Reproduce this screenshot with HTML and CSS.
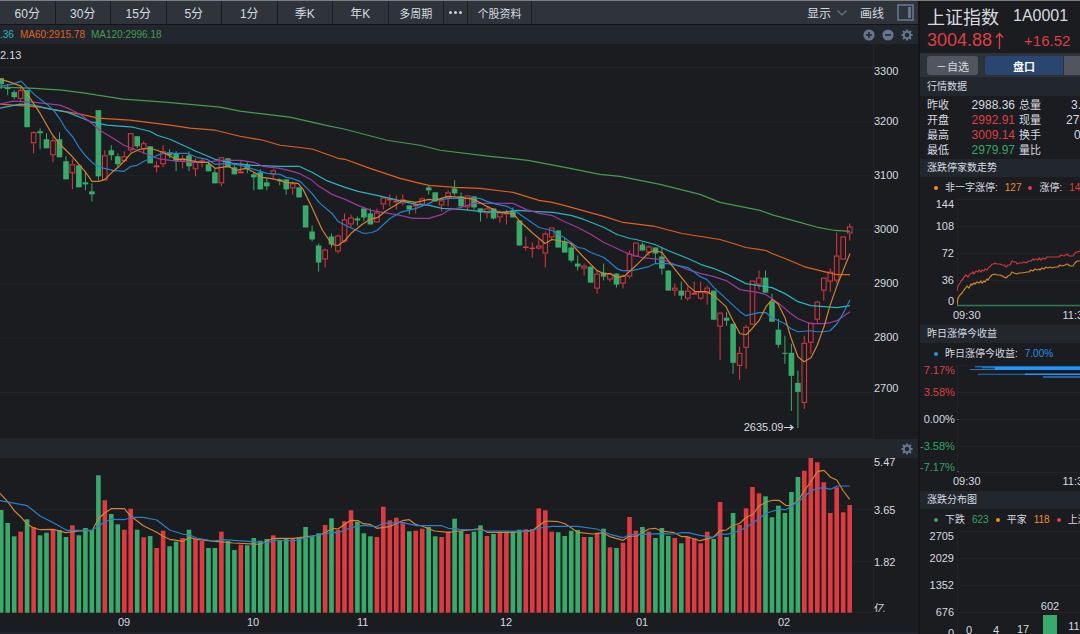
FILE: index.html
```html
<!DOCTYPE html>
<html lang="zh-CN">
<head>
<meta charset="utf-8">
<title>上证指数 1A0001</title>
<link rel="stylesheet" href="styles.css">
</head>
<body>
<svg class="defs" aria-hidden="true">
  <symbol id="gear" viewBox="0 0 12 12">
    <g stroke="currentColor" stroke-width="2.2"><path d="M6 .4v11.2M.4 6h11.2M2 2l8 8M10 2l-8 8"/></g>
    <circle cx="6" cy="6" r="4.1" fill="currentColor"/><circle cx="6" cy="6" r="2.2" fill="#22272e"/>
  </symbol>
</svg>
<div class="app">
  <main class="board">
    <nav class="toolbar">
      <div class="periods">
        <button>60分</button><button>30分</button><button>15分</button><button>5分</button><button>1分</button><button>季K</button><button>年K</button><button class="small">多周期</button>
      </div>
      <button class="more" aria-label="更多"><i></i><i></i><i></i></button>
      <button class="info small">个股资料</button>
      <div class="tools">
        <button>显示<svg width="10" height="6" viewBox="0 0 10 6"><path d="M.5 .5L5 5L9.500 .5" fill="none" stroke="#66758f" stroke-width="1.2"/></svg></button>
        <button>画线</button>
        <button aria-label="侧栏"><svg width="17" height="17" viewBox="0 0 17 17"><rect x="1" y="1" width="15" height="15" fill="none" stroke="#66758f" stroke-width="1.6"/><rect x="11" y="3" width="3" height="11" fill="#66758f"/></svg></button>
      </div>
    </nav>
    <div class="strip">
      <span class="cyan">.36</span><span class="rust">MA60:2915.78</span><span class="leaf">MA120:2996.18</span>
      <div class="icons">
        <button aria-label="放大"><svg width="12" height="12" viewBox="0 0 12 12"><circle cx="6" cy="6" r="5.6" fill="currentColor"/><path d="M6 3v6M3 6h6" stroke="#22272e" stroke-width="1.6"/></svg></button>
        <button aria-label="缩小"><svg width="12" height="12" viewBox="0 0 12 12"><circle cx="6" cy="6" r="5.6" fill="currentColor"/><path d="M3 6h6" stroke="#22272e" stroke-width="1.6"/></svg></button>
        <button aria-label="设置"><svg width="12" height="12"><use href="#gear"/></svg></button>
      </div>
    </div>
    <section class="pane price">
      <div class="plot">
        <svg id="price" viewBox="0 44 873 394" preserveAspectRatio="none"></svg>
        <span class="peak">2.13</span>
        <span class="low">2635.09<svg width="10" height="7" viewBox="0 0 10 7"><path d="M0 3.500H8M6 1L9 3.500L6 6" fill="none" stroke="currentColor" stroke-width="1.2"/></svg></span>
      </div>
      <div class="axis"><span>3300</span><span>3200</span><span>3100</span><span>3000</span><span>2900</span><span>2800</span><span>2700</span></div>
    </section>
    <div class="strip vol"><div class="icons"><button aria-label="成交量设置"><svg width="12" height="12"><use href="#gear"/></svg></button></div></div>
    <section class="pane volume">
      <div class="plot"><svg id="volume" viewBox="0 458 873 155" preserveAspectRatio="none"></svg></div>
      <div class="axis"><span>5.47</span><span>3.65</span><span>1.82</span><span>亿</span></div>
    </section>
    <div class="months"><span></span><span>09</span><span>10</span><span>11</span><span>12</span><span>01</span><span>02</span></div>
    <div class="foot"></div>
  </main>

  <aside class="quote">
    <header>
      <h1>上证指数 <span>1A0001</span></h1>
      <p class="last"><b>3004.88</b><svg width="9" height="17" viewBox="0 0 9 17"><path d="M4.500 17V1.500M1 5.500L4.500 1.500L8 5.500" fill="none" stroke="currentColor" stroke-width="1.3"/></svg><span>+16.52</span></p>
    </header>
    <div class="switch"><button class="fav">－自选</button><button class="tab on">盘口</button><button class="tab" aria-label="更多"></button></div>
    <h2 class="first">行情数据</h2>
    <table>
      <tr><th>昨收</th><td>2988.36</td><th>总量</th><td class="cut">3.</td></tr>
      <tr><th>开盘</th><td class="red">2992.91</td><th>现量</th><td class="cut wide">27.</td></tr>
      <tr><th>最高</th><td class="red">3009.14</td><th>换手</th><td class="cut zero">0</td></tr>
      <tr><th>最低</th><td class="green">2979.97</td><th>量比</th><td></td></tr>
    </table>
    <section class="mini">
      <h2>涨跌停家数走势</h2>
      <div class="legend"><i class="amber"></i><span>非一字涨停:</span><em class="amber">127</em><i class="red"></i><span>涨停:</span><em class="red">14</em></div>
      <div class="graph"><div class="scale"><span>144</span><span>108</span><span>72</span><span>36</span><span>0</span></div><svg id="limit" width="123" height="115" viewBox="0 0 123 115"></svg></div>
      <div class="hours"><span>09:30</span><span>11:30</span></div>
    </section>
    <section class="mini">
      <h2>昨日涨停今收益</h2>
      <div class="legend"><i class="blue"></i><span>昨日涨停今收益:</span><em class="blue">7.00%</em></div>
      <div class="graph"><div class="scale"><span class="red">7.17%</span><span class="red">3.58%</span><span>0.00%</span><span class="green">-3.58%</span><span class="green">-7.17%</span></div><svg id="gain" width="123" height="115" viewBox="0 0 123 115"></svg></div>
      <div class="hours"><span>09:30</span><span>11:30</span></div>
    </section>
    <section class="mini">
      <h2>涨跌分布图</h2>
      <div class="legend"><i class="green"></i><span>下跌</span><em class="green">623</em><i class="amber"></i><span>平家</span><em class="amber">118</em><i class="red"></i><span>上涨</span></div>
      <div class="graph"><div class="scale"><span>2705</span><span>2029</span><span>1352</span><span>676</span><span>0</span></div><svg id="spread" width="123" height="115" viewBox="0 0 123 115"></svg></div>
    </section>
  </aside>
</div>
<script src="chart.js"></script>
</body>
</html>
```
FILE: styles.css
```css
* { box-sizing: border-box; }
body {
  margin: 0;
  height: 100vh;
  overflow: hidden;
  background: #1b1c1f;
  color: #d6dae0;
  font-family: "Liberation Sans", "Noto Sans CJK SC", sans-serif;
  font-size: 11px;
}
button {
  margin: 0;
  padding: 0;
  border: 0;
  background: none;
  color: inherit;
  font: inherit;
  white-space: nowrap;
}
h1, h2, p { margin: 0; font-weight: normal; }
svg { display: block; }
em { font-style: normal; }
.defs { position: absolute; width: 0; height: 0; }
.app {
  display: grid;
  grid-template-columns: 1fr 162px;
  min-height: 100vh;
  border-top: 1px solid #7b7d7e;
}
.board { min-width: 0; }

.toolbar {
  display: flex;
  height: 24px;
  background: #2f343b;
  border-bottom: 1px solid #131417;
  font-size: 12px;
}
.periods {
  display: grid;
  grid-template-columns: repeat(8, 1fr);
  width: 444px;
}
.periods button, .more, .info { border-right: 1px solid #1a1c20; }
.toolbar .small { font-size: 11px; }
.more {
  display: flex;
  align-items: center;
  justify-content: center;
  gap: 2px;
  width: 24px;
}
.more i { width: 3px; height: 3px; border-radius: 50%; background: #ced2d8; }
.info { width: 64px; }
.tools {
  display: flex;
  align-items: center;
  gap: 13px;
  margin-left: auto;
  padding-right: 4px;
}
.tools button { display: flex; align-items: center; gap: 6px; }

.strip {
  display: flex;
  align-items: center;
  gap: 6px;
  height: 19px;
  background: #22272e;
  font-size: 10px;
}
.icons {
  display: flex;
  gap: 7px;
  margin-left: auto;
  padding-right: 5px;
  color: #66758f;
}
.pane { display: grid; grid-template-columns: 1fr 45px; }
.plot { position: relative; min-width: 0; }
.plot > svg { width: 100%; height: 100%; }
.price { height: 395px; }
.volume { height: 155px; }
.peak { position: absolute; left: 0; top: 5px; }
.low {
  position: absolute;
  right: 9%;
  top: 377px;
  display: flex;
  align-items: center;
  gap: 1px;
}
.axis {
  display: grid;
  border-left: 1px solid #222428;
  line-height: 12px;
  align-items: center;
}
.price .axis { grid-template-rows: 50px repeat(5, 54px) 48px; align-content: start; }
.price .axis span:first-child { padding-top: 4px; }
.volume .axis { grid-template-rows: 8px 88px 16px 42px; }
.volume .axis span:last-child { align-self: end; height: 9px; overflow: hidden; }
.months {
  display: grid;
  grid-template-columns: 118fr 129fr 110fr 143fr 136fr 142fr 95fr;
  margin-right: 45px;
  line-height: 19px;
}
.foot { height: 3px; background: #20232b; }

.quote {
  min-width: 0;
  overflow: hidden;
  border-left: 2px solid #141518;
}
.quote header { height: 52px; padding: 3px 0 0 7px; white-space: nowrap; }
h1 { display: flex; align-items: center; gap: 14px; height: 24px; font-size: 18px; }
h1 span { font-size: 16px; }
.last { display: flex; align-items: center; height: 24px; color: #dc3f46; }
.last b { font-size: 18px; font-weight: normal; }
.last svg { margin-left: 3px; }
.last span { margin-left: 20px; font-size: 15px; }
.switch {
  display: flex;
  height: 24px;
  padding: 3px 0 2px 7px;
  background: #2d3138;
}
.fav { flex: none; width: 51px; margin-right: 7px; border-radius: 3px; background: #50555f; }
.tab { width: 79px; flex: none; background: #50555f; }
.tab.on {
  border-right: 1px solid #2d3138;
  border-radius: 3px 0 0 3px;
  background: #28466f;
  color: #fff;
  font-weight: bold;
}
h2 {
  height: 18px;
  padding-left: 7px;
  background: #22272e;
  font-size: 10px;
  line-height: 18px;
}
h2.first { height: 19px; line-height: 19px; }
table {
  width: 100%;
  margin: 2px 0 1px;
  border-collapse: collapse;
  table-layout: fixed;
}
tr { height: 15px; }
th, td { padding: 0; line-height: 15px; font-weight: normal; white-space: nowrap; }
th { width: 29px; padding-left: 7px; text-align: left; }
th:nth-child(3) { padding-left: 4px; width: 44px; }
td { font-size: 12px; text-align: right; }
td:nth-child(2) { width: 66px; }
td.cut { text-align: left; padding-left: 12px; }
td.wide { padding-left: 7px; }
td.zero { padding-left: 15px; }

.legend {
  display: flex;
  align-items: center;
  gap: 7px;
  height: 18px;
  padding: 4px 0 0 14px;
  font-size: 10px;
  line-height: 14px;
  white-space: nowrap;
}
.legend i { flex: none; width: 4px; height: 4px; border-radius: 50%; background: currentColor; }
.graph { display: flex; height: 115px; }
.scale {
  display: grid;
  grid-template-rows: 18px 26px 28px 26px 16px;
  align-items: center;
  justify-items: end;
  width: 37px;
  padding-right: 3px;
  line-height: 12px;
}
.graph svg { flex: none; font-size: 11px; }
.hours {
  display: flex;
  gap: 82px;
  height: 15px;
  padding-left: 33px;
  line-height: 10px;
}
.cyan { color: #2bb3c3; }
.rust { color: #e0601f; }
.leaf { color: #479a50; }
.red { color: #dc3f46; }
.green { color: #35a466; }
.amber { color: #ee8d30; }
.blue { color: #2492ee; }
```
FILE: chart.js
```js
const STEP = 6.477, FIRST = 1.2;
const RED = "#dc3b42", GREEN = "#38aa6b";
const X = i => (FIRST + STEP * i).toFixed(1);

// body top, body bottom, high, low
const candles = `g78,84,78,89 g87,89,84,95 g92,97,90,99 r90,99,87,101 g90,127,90,127 r132,143,131,153 g131,133,128,149 g139,148,133,148
r140,155,136,162 g139,157,132,157 g161,179,156,179 r164,173,159,189 g165,187,165,187 g182,184,171,190 g191,194,183,201 g110,176,110,180
r155,180,150,180 g150,155,145,160 g156,164,153,168 r156,161,151,162 r133,150,133,152 g136,146,136,148 r143,149,141,154 g146,163,146,163
r165,167,161,172 r151,164,145,167 g152,155,149,158 g153,161,151,171 r158,161,155,168 g155,166,151,171 r161,169,158,176 r160,162,158,167
g164,171,161,171 g172,183,169,183 r157,183,157,186 g158,167,158,167 g167,174,163,174 r171,173,161,173 g165,169,162,173 g174,177,172,190
g172,189,169,189 g182,186,178,190 r170,174,169,179 g179,181,178,185 g179,189,179,194 r183,188,181,194 g187,197,187,197 g205,227,205,227
g231,239,225,241 g245,262,243,271 r249,259,248,267 g236,244,233,247 r235,251,234,253 r219,241,213,242 r217,224,214,227 g218,220,216,225
g208,217,208,221 g213,224,208,224 r212,222,208,222 r197,204,197,209 r198,200,194,206 r200,202,195,209 r199,203,194,205 g205,209,205,214
r204,206,202,213 r198,204,197,206 g187,190,185,194 g192,201,192,201 r200,205,197,211 r192,198,190,206 g188,193,180,195 g196,206,192,206
r195,207,195,210 g196,207,196,209 g208,212,208,221 r208,213,206,218 g208,218,208,219 r212,217,210,222 r212,214,209,224 g210,217,207,217
g220,245,220,245 r246,247,236,250 r247,248,242,257 r245,248,239,249 r233,253,231,267 r227,237,227,239 g230,247,230,247 g241,252,237,252
g247,260,242,262 g263,266,255,270 r265,268,263,275 g266,282,266,282 r273,288,270,293 g272,276,263,280 r273,279,272,281 g273,284,273,287
r275,283,274,288 r253,276,250,278 r242,256,242,256 g244,250,242,250 r246,252,245,255 g247,253,247,263 g256,268,247,274 g270,290,270,290
r287,290,283,295 g290,295,281,299 r290,298,286,300 r292,294,281,294 r291,298,281,299 r287,293,285,304 g290,319,290,319 r312,326,312,359
g317,320,311,325 g323,362,323,373 r352,365,346,379 r326,347,324,368 r280,324,280,324 r277,284,270,289 g277,292,270,292 g301,321,293,321
g329,344,318,347 g352,353,335,363 g352,375,343,410 g382,391,370,427 r342,402,335,408 r322,342,322,353 r301,319,300,322 r277,290,277,300
r271,281,268,291 r255,280,232,283 r236,259,236,259 r226,233,223,240`.split(/\s+/);

const averages = [
  ["#479a50", "0,87 30,88 62,90 85,93 123,99 165,102 220,107 240,111 290,117 325,125 345,129 387,140 420,145 440,150 490,156 528,160 565,167 600,174 620,176 660,184 700,194 720,202 760,210 774,215 800,222 818,227 835,230 850,231"],
  ["#e0601f", "0,104 40,107 80,114 98,118 130,120 170,125 190,128 215,130 240,136 263,140 280,145 298,147 313,149 338,158 345,159 370,168 400,178 416,182 429,185 455,187 480,188 513,192 539,200 552,202 564,205 604,216 623,222 655,226 682,233 720,239 730,242 746,247 766,250 772,253 785,258 804,266 824,271 837,274 850,274"],
  ["#2bb3c3", "0,108 20,104 33,105 50,109 67,112 80,117 92,122 107,125 133,127 150,131 157,135 170,139 183,145 196,151 208,156 215,159 233,163 253,165 280,166 299,166 312,172 326,180 345,187 358,191 377,195 390,198 403,201 416,204 429,205 442,208 461,209 480,211 500,212 517,210 533,211 553,212 571,215 584,219 604,227 617,234 630,238 636,239 655,244 668,250 688,258 701,264 714,268 726,273 740,280 746,283 759,285 772,287 785,293 798,301 811,305 824,306 837,307 850,305"],
  ["#9c3a9d", "0,104 13,101 33,102 60,105 70,109 80,114 88,120 100,130 113,138 124,145 137,150 150,155 157,158 170,160 193,162 205,162 220,160 241,160 254,162 263,166 280,168 292,171 299,173 312,180 319,186 332,194 345,199 358,205 371,210 383,212 400,215 413,218 429,218 442,214 448,210 461,207 474,203 500,203 513,203 526,209 539,213 552,215 564,221 578,227 591,234 604,242 617,248 630,254 642,257 662,259 675,264 688,269 701,273 714,276 726,280 740,289 746,290 759,292 766,294 778,302 791,313 798,318 811,323 824,323 830,322 837,320 850,311"],
  ["#2580d0", "0,86 13,84 21,81 27,87 35,95 47,104 55,112 60,119 66,129 73,137 79,147 86,156 93,163 100,167 113,170 124,171 131,166 137,165 144,161 153,157 160,154 167,153 187,153 197,157 207,159 215,164 228,163 241,165 254,169 267,173 280,174 286,177 292,178 300,181 312,193 319,202 332,213 338,221 350,227 364,233 372,232 377,230 390,218 400,212 416,208 429,203 435,200 450,198 480,198 487,201 497,204 507,206 513,209 526,218 539,227 552,230 564,237 578,247 584,248 591,252 604,257 610,262 617,268 622,270 632,270 649,266 655,263 668,263 688,267 700,276 707,279 714,287 726,298 740,311 746,315 759,312 766,312 772,317 785,323 791,328 798,331 811,330 817,331 824,331 830,330 837,323 843,313 850,299"],
  ["#cf8534", "0,79 10,82 21,86 30,98 40,113 52,134 60,144 72,156 85,171 92,181 99,181 105,179 112,172 118,167 125,160 131,153 140,149 150,148 157,150 165,153 176,159 185,159 200,162 208,162 215,168 228,166 236,170 246,168 254,172 262,177 270,178 280,180 285,182 298,183 303,189 312,207 322,229 332,244 338,245 345,240 352,232 362,224 370,219 378,217 385,211 395,205 403,200 416,202 429,199 435,200 448,196 461,197 474,199 487,206 500,212 513,213 519,220 532,232 545,243 552,239 564,241 571,243 584,257 597,270 604,273 610,273 617,277 625,275 636,265 649,252 655,250 662,252 672,265 688,285 695,291 707,291 714,295 726,306 733,320 740,333 746,334 752,328 759,320 766,306 772,299 778,303 785,317 791,337 798,356 804,361 811,357 817,345 824,326 830,305 837,285 850,253"]
];

// bar tops in thirds of a unit below 430
const volumes = `g240 g279 g319 r305 g268 r291 g316 g308 r299 g300 g321 r286 g316 g294 g300 g136 r211 g252 g283 r299 r236 g299 r322 g318 r354 r302 g349 g335 r324 g299 r327 r333
g354 g354 r305 g333 g360 r344 g346 g324 g332 g327 r316 g331 g325 r327 g322 g291 g319 g310 r285 g265 r299 r274 r241 g275 g310 g319 r321 r230 r271 r263 r280 g304 r302 r296 g291 g319 r321 r305 g266
g303 r312 g305 g286 r318 g312 r305 r305 g305 g299 r298 r297 r235 r241 r305 g307 g318 g302 g300 r321 g321 r308 g296 r352 g354 r338 r261 r302 g291 r305 g324 g294 g318 r324 g340 r320 r325 r340 r305 g327
r216 g321 g249 r285 r235 r171 r190 g199 g262 g227 g249 g186 g141 r122 r83 r97 r157 r249 r172 r247 r225`.split(/\s+/);

const volumeLines = [
  ["#cf8534", "0,190 23,215 43,242 62,260 82,283 100,293 120,299 160,298 198,308 237,303 276,302 296,265 315,248 334,236 373,236 392,258 430,287 470,307 489,319 509,328 550,334 568,322 590,328 645,334 700,339 780,343 820,325 880,325 960,315 1000,295 1014,297 1052,271 1075,272 1090,281 1110,283 1130,295 1168,290 1207,272 1228,269 1248,284 1265,288 1304,303 1345,307 1380,303 1442,296 1462,307 1540,307 1598,301 1636,273 1675,275 1695,281 1733,307 1780,312 1810,308 1830,320 1869,331 1888,319 1910,318 1946,297 1965,295 1985,303 2023,308 2045,320 2062,320 2100,332 2140,322 2160,302 2179,300 2200,285 2218,281 2239,262 2260,252 2278,227 2298,217 2317,211 2337,211 2357,226 2373,227 2394,212 2414,180 2432,156 2452,125 2472,121 2492,142 2511,151 2530,183 2549,208"],
  ["#2580d0", "0,212 82,227 120,258 160,278 200,301 276,301 315,275 334,268 373,269 395,262 430,262 470,270 509,300 550,313 568,314 590,324 640,333 670,329 800,338 830,330 880,333 940,318 1000,307 1014,308 1052,293 1090,286 1130,290 1150,280 1207,277 1250,287 1325,287 1345,295 1380,298 1440,300 1462,303 1585,304 1620,294 1655,289 1733,289 1790,297 1830,313 1869,323 1888,314 1930,313 1980,311 2020,312 2045,308 2065,308 2100,316 2140,322 2160,312 2180,313 2218,303 2239,292 2260,278 2298,250 2337,238 2357,239 2394,215 2432,184 2452,175 2472,173 2492,178 2511,168 2549,168"]
];

const line = (points, color, width = 1.2) =>
  `<polyline points="${points}" fill="none" stroke="${color}" stroke-width="${width}" stroke-linejoin="round"/>`;
const grid = (ys, width) => ys.map(y => `<path d="M0 ${y}.5H${width}" stroke="#212327"/>`).join("");
const draw = (id, markup) => { document.getElementById(id).innerHTML = markup; };

draw("price", grid([67, 121, 175, 229, 283, 337, 391, 437], 873) +
  candles.map((entry, i) => {
    const [top, bottom, high, low] = entry.slice(1).split(",").map(Number);
    const x = +X(i);
    if (entry[0] === "g") {
      return `<path d="M${x} ${high}V${low}" stroke="${GREEN}"/><rect x="${x - 2.8}" y="${top}" width="5.6" height="${bottom - top}" fill="${GREEN}"/>`;
    }
    return `<path d="M${x} ${high}V${top}M${x} ${bottom}V${low}" stroke="${RED}"/><rect x="${x - 2.3}" y="${top + .5}" width="4.6" height="${Math.max(bottom - top - 1, .5)}" fill="none" stroke="${RED}"/>`;
  }).join("") + averages.map(([color, points]) => line(points, color)).join(""));

draw("volume", grid([509, 561, 612], 873) +
  volumes.map((entry, i) => {
    const y = 430 + entry.slice(1) / 3;
    return `<rect x="${X(i) - 2.3}" y="${y.toFixed(1)}" width="4.6" height="${(612.7 - y).toFixed(1)}" fill="${entry[0] === "g" ? GREEN : RED}"/>`;
  }).join("") + volumeLines.map(([color, points]) =>
    line(points.split(" ").map(p => { const [x, y] = p.split(","); return `${(x / 3).toFixed(1)},${(430 + y / 3).toFixed(1)}`; }).join(" "), color)).join(""));

const miniGrid = grid([4, 31, 58, 85, 111], 123) + `<path d="M.5 4V111" stroke="#212327"/>`;

draw("limit", miniGrid +
  line("0,96 1,91 3,88 4,86 6,84 7,82 9,80 11,82 13,79 15,78 16,77 17,79 19,76 21,77 22,75 24,77 25,75 27,76 28,74 30,75 32,72 33,72 35,69 37,69 38,68 40,69 43,69 45,70 47,70 49,72 51,70 53,70 55,66 57,67 59,67 60,69 62,68 65,68 67,67 69,68 72,66 74,66 76,64 77,65 79,64 81,65 82,63 84,65 86,63 88,64 90,62 102,62 104,60 107,61 110,59 112,61 116,61 118,58 120,57 123,56", "#cb363e") +
  line("0,111 1,103 3,100 5,98 7,95 8,94 10,91 12,93 14,89 15,90 17,88 18,89 20,87 22,88 24,86 25,88 27,86 28,87 30,84 31,85 33,82 35,80 38,79 40,80 43,80 45,81 47,82 49,83 51,81 53,80 55,77 57,78 60,79 62,78 65,78 70,77 72,77 74,75 76,76 78,74 80,75 82,74 83,75 85,73 87,74 89,72 91,73 93,72 95,73 98,72 101,72 103,70 105,71 108,70 110,69 113,71 116,71 118,68 120,66 123,66", "#d4822b") +
  `<path d="M0 110.5H123" stroke="#257e4d" stroke-width="1.4"/>`);

draw("gain", miniGrid +
  `<path d="M18 5.800H123M25 6.800H123" stroke="#1f8df0"/><rect x="38" y="6" width="85" height="3" fill="#2196ff"/>
   <path d="M13 8.500H38" stroke="#2478bd"/><path d="M21 13.300H70" stroke="#2478bd"/><path d="M68 13.300H123" stroke="#2196ff" stroke-width="1.5"/>
   <path d="M86 16H123" stroke="#20639d" stroke-width="1.8"/><path d="M0 58.500H2M0 110.500H2" stroke="#1c5b95"/>`);

const spread = [[12, 0, 111], [39, 4, 111], [66, 17, 110], [93, 602, 87], [120, 114, 107]];
draw("spread", miniGrid + spread.map(([x, value, top]) =>
  `<rect x="${x - 7}" y="${top + 1}" width="14" height="${111 - top}" fill="${value > 0 ? GREEN : "none"}"/><text x="${x}" y="${top - 4}" text-anchor="middle" fill="#d6dae0">${value}</text>`).join(""));
```
